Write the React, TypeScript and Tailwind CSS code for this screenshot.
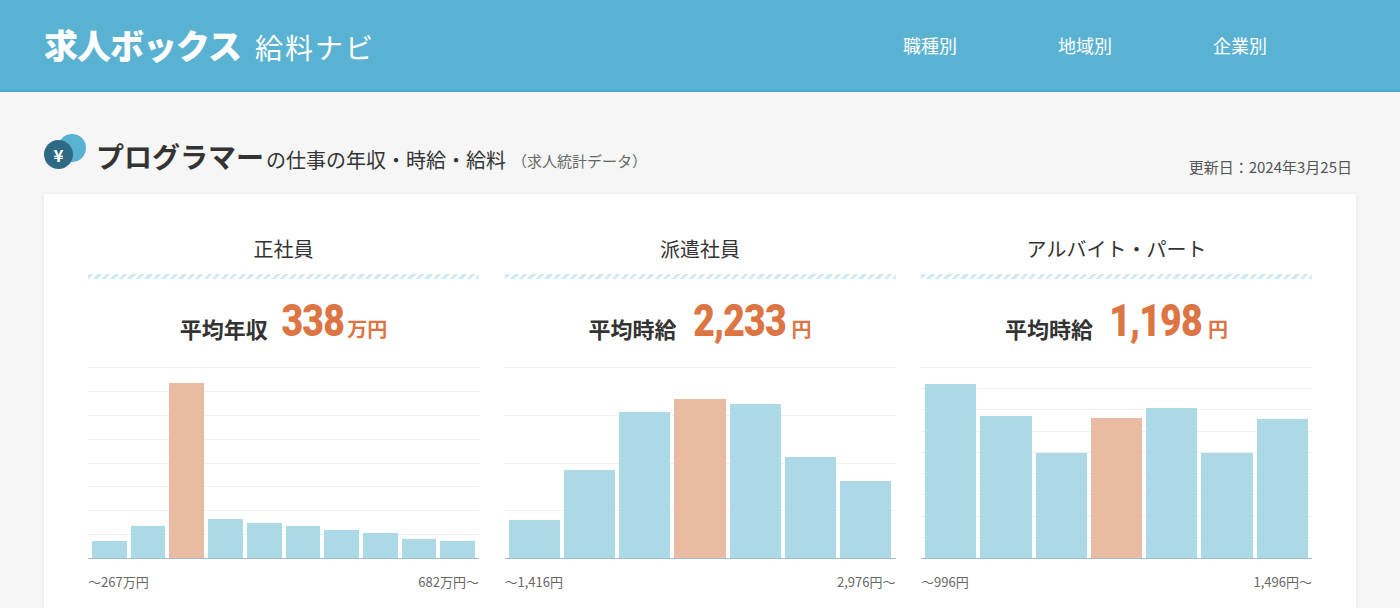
import React from "react";

const F = { fontFamily: '"Noto Sans CJK JP", "Noto Sans", sans-serif' };

type Chart = { title: string; label: string; value: string; unit: string; bars: number[]; hi: number; lo: string; hiL: string; grid: number };
const charts: Chart[] = [
  { title: "正社員", label: "平均年収", value: "338", unit: "万円", bars: [17, 32, 175, 39, 35, 32, 28, 25, 19, 17], hi: 2, lo: "〜267万円", hiL: "682万円〜", grid: 9 },
  { title: "派遣社員", label: "平均時給", value: "2,233", unit: "円", bars: [38, 88, 146, 159, 154, 101, 77], hi: 3, lo: "〜1,416円", hiL: "2,976円〜", grid: 5 },
  { title: "アルバイト・パート", label: "平均時給", value: "1,198", unit: "円", bars: [174, 142, 105, 140, 150, 105, 139], hi: 3, lo: "〜996円", hiL: "1,496円〜", grid: 10 },
];

function ChartCol({ c }: { c: Chart }) {
  const H = 192;
  const n = c.bars.length;
  return (
    <div className="flex flex-col w-[391px]">
      <div className="text-center text-[20px] text-[#333] leading-none pt-[45px] pb-[15px]">{c.title}</div>
      <div className="h-[5px] w-full" style={{ backgroundImage: "repeating-linear-gradient(-45deg, #cfeaf4 0 3px, transparent 3px 6px)" }} />
      <div className="flex items-end justify-center gap-[8px] h-[62px] mt-[2px]">
        <span className="text-[22px] font-bold text-[#333] leading-none mb-[4px]">{c.label}</span>
        <span className="text-[44px] font-black text-[#dc7543] leading-none tracking-[-1px]" style={{ fontFamily: '"Roboto", "Noto Sans", sans-serif', transform: "scaleX(0.85)" }}>{c.value}</span>
        <span className="text-[20px] font-bold text-[#dc7543] leading-none mb-[4px] -ml-[10px]">{c.unit}</span>
      </div>
      <div className="relative mt-[24px]" style={{ height: H }}>
        <div className="absolute inset-0 flex flex-col justify-between">
          {Array.from({ length: c.grid }).map((_, i) => (
            <div key={i} className="h-px bg-[#f0f0f0]" />
          ))}
        </div>
        <div className="relative h-full flex items-end px-[4px] gap-[4px] border-b border-[#9fbfcc]">
          {c.bars.map((b, i) => (
            <div key={i} className={i === c.hi ? "bg-[#e8bba2]" : "bg-[#abd9e6]"} style={{ height: b, flex: 1 }} />
          ))}
        </div>
      </div>
      <div className="flex justify-between text-[13px] text-[#666] mt-[13px]">
        <span>{c.lo}</span>
        <span>{c.hiL}</span>
      </div>
      {n < 0 && null}
    </div>
  );
}

export default function App() {
  return (
    <div className="w-[1400px] h-[608px] bg-[#f6f6f6] overflow-hidden" style={F}>
      <header className="h-[92px] bg-[#5ab2d2] border-b-2 border-[#4aa9cc] flex items-center px-[44px]">
        <div className="flex items-baseline gap-[14px] text-white">
          <span className="text-[34px] font-black tracking-[-1px] leading-none">求人ボックス</span>
          <span className="text-[28px] leading-none tracking-[2px]">給料ナビ</span>
        </div>
        <nav className="ml-auto flex text-white text-[18px] gap-[101px] mr-[89px]">
          <span>職種別</span><span>地域別</span><span>企業別</span>
        </nav>
      </header>
      <div className="flex items-end px-[44px] mt-[42px]">
        <div className="relative w-[44px] h-[36px] mr-[8px]">
          <div className="absolute left-[14px] top-0 w-[28px] h-[28px] rounded-full bg-[#5ab2d2]" />
          <div className="absolute left-0 top-[6px] w-[29px] h-[29px] rounded-full bg-[#2e6a83] text-white text-[17px] font-bold flex items-center justify-center">¥</div>
        </div>
        <span className="text-[28px] font-bold text-[#333] leading-none">プログラマー</span>
        <span className="text-[20px] text-[#333] leading-none ml-[2px]">の仕事の年収・時給・給料</span>
        <span className="text-[15px] text-[#666] leading-none ml-[6px] mb-[2px]">（求人統計データ）</span>
        <span className="ml-auto text-[15px] text-[#555] -mb-[8px] mr-[4px]">更新日：2024年3月25日</span>
      </div>
      <div className="mx-[44px] mt-[24px] bg-white shadow-[0_0_4px_rgba(0,0,0,0.08)] h-[420px] flex justify-between px-[44px]">
        {charts.map((c) => <ChartCol key={c.title} c={c} />)}
      </div>
    </div>
  );
}
